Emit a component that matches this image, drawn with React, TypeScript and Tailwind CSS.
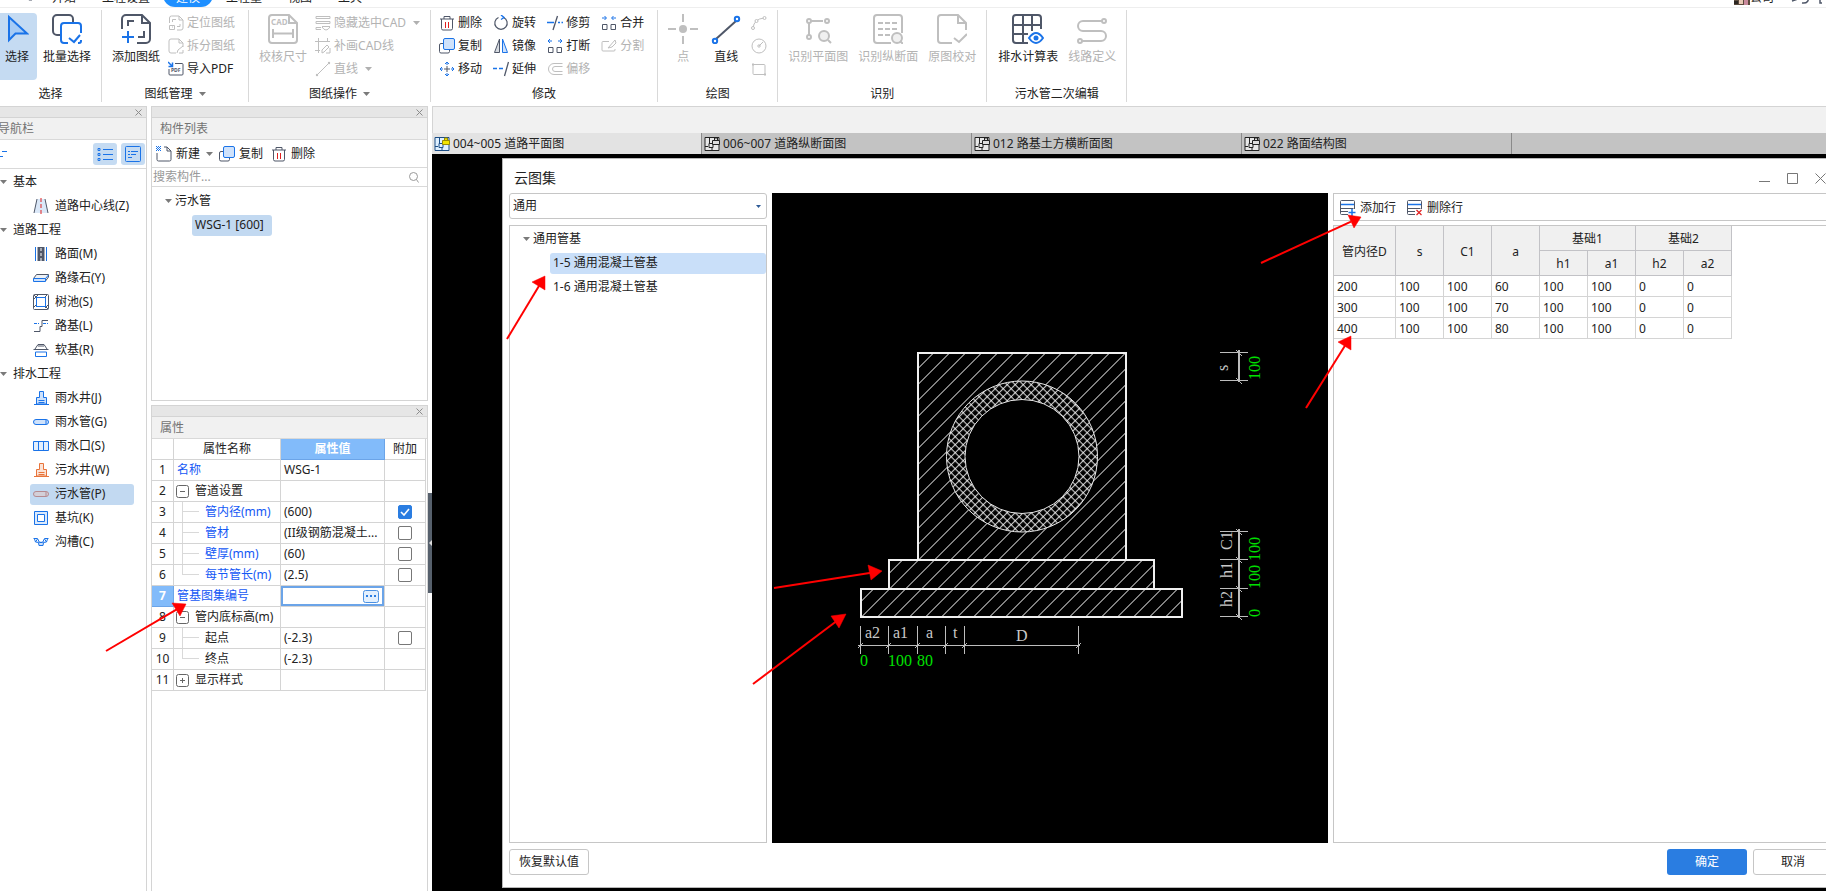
import React from 'react';

const DARK = '#4f5768';
const BLUE = '#1a73e8';
const GRAY = '#bfbfbf';
const LIGHT = '#cfe2fb';

interface IconProps {
  size?: number;
  children: React.ReactNode;
}

const Icon = ({ size = 16, children }: IconProps) => (
  <svg width={size} height={size} viewBox={`0 0 ${size} ${size}`} fill="none" className="shrink-0" aria-hidden="true">
    {children}
  </svg>
);

const Caret = ({ className = 'text-[#7a7a7a]' }: { className?: string }) => (
  <svg width="7" height="4" viewBox="0 0 7 4" className={`shrink-0 ${className}`} aria-hidden="true">
    <path d="M0 0h7L3.5 4z" fill="currentColor" />
  </svg>
);

/* ---------- large ribbon icons (30px) ---------- */

const SelectIcon = () => (
  <svg width="24" height="30" viewBox="0 0 24 30" fill="none" aria-hidden="true">
    <path d="M4 3v23l6.500-6.500L22 19.500z" fill="#a6cbf5" stroke={BLUE} strokeWidth="2" />
  </svg>
);

const BatchSelectIcon = () => (
  <Icon size={30}>
    <path d="M9 21H5a4 4 0 0 1-4-4V5a4 4 0 0 1 4-4h12a4 4 0 0 1 4 4v3" stroke={DARK} strokeWidth="2" />
    <path d="M16 29h-4a3 3 0 0 1-3-3V12a3 3 0 0 1 3-3h14a3 3 0 0 1 3 3v7M29 26v1a2 2 0 0 1-2 2h-1" stroke={BLUE} strokeWidth="2" />
    <path d="M17 24l5 4 6-7" stroke={BLUE} strokeWidth="2" />
  </Icon>
);

const AddDrawingIcon = () => (
  <Icon size={30}>
    <path d="M1 15V5a4 4 0 0 1 4-4h16l8 8v16a4 4 0 0 1-4 4h-9" stroke={DARK} strokeWidth="2" />
    <path d="M21 1v8h8" stroke={DARK} strokeWidth="2" />
    <path d="M7 12V7h6M17 23h6v-6" stroke={DARK} strokeWidth="2" />
    <path d="M7 17v12M1 23h12" stroke={BLUE} strokeWidth="2" />
  </Icon>
);

const CheckSizeIcon = () => (
  <Icon size={30}>
    <path d="M21 1H4a3 3 0 0 0-3 3v22a3 3 0 0 0 3 3h22a3 3 0 0 0 3-3V9zv8h8" stroke={GRAY} strokeWidth="2" />
    <path d="M5 15v9M25 15v9M5 19.500h20" stroke={GRAY} strokeWidth="2" />
    <text x="3" y="11" fontSize="8" fontWeight="700" fill={GRAY}>CAD</text>
  </Icon>
);

const PointIcon = () => (
  <Icon size={30}>
    <path d="M15 0v8M15 22v8M0 15h8M22 15h8" stroke={GRAY} strokeWidth="2" />
    <circle cx="15" cy="15" r="4" fill={GRAY} />
  </Icon>
);

const LineIcon = () => (
  <Icon size={30}>
    <path d="M5 25L25 7" stroke={DARK} strokeWidth="2" />
    <circle cx="4" cy="27" r="2.200" fill="#fff" stroke={BLUE} strokeWidth="2" />
    <circle cx="26" cy="5" r="2.200" fill="#fff" stroke={BLUE} strokeWidth="2" />
  </Icon>
);

const PlanIcon = () => (
  <Icon size={30}>
    <path d="M6 7h14M6 7v14" stroke={GRAY} strokeWidth="2" />
    <circle cx="6" cy="7" r="2" fill="#fff" stroke={GRAY} strokeWidth="2" />
    <circle cx="24" cy="7" r="2" fill="#fff" stroke={GRAY} strokeWidth="2" />
    <circle cx="6" cy="23" r="2" fill="#fff" stroke={GRAY} strokeWidth="2" />
    <circle cx="21" cy="22" r="5" fill="#f0f0f0" stroke={GRAY} strokeWidth="2" />
    <path d="M25 26l3 3" stroke={GRAY} strokeWidth="2" />
  </Icon>
);

const SectionIcon = () => (
  <Icon size={30}>
    <path d="M18 29H4a3 3 0 0 1-3-3V4a3 3 0 0 1 3-3h22a3 3 0 0 1 3 3v15" stroke={GRAY} strokeWidth="2" />
    <path d="M5 9h20M5 15h20M5 21h12" stroke={GRAY} strokeWidth="2" strokeDasharray="5 2" />
    <circle cx="24" cy="24" r="5" fill="#f0f0f0" stroke={GRAY} strokeWidth="2" />
    <path d="M27 27l3 3" stroke={GRAY} strokeWidth="2" />
  </Icon>
);

const CompareIcon = () => (
  <Icon size={30}>
    <path d="M15 29H4a3 3 0 0 1-3-3V4a3 3 0 0 1 3-3h17l8 8v7" stroke={GRAY} strokeWidth="2" />
    <path d="M21 1v8h8" stroke={GRAY} strokeWidth="2" />
    <path d="M17 24l5 4 8-8" stroke={GRAY} strokeWidth="2" />
  </Icon>
);

const DrainTableIcon = () => (
  <Icon size={32}>
    <path d="M16 29H4a3 3 0 0 1-3-3V4a3 3 0 0 1 3-3h22a3 3 0 0 1 3 3v11M1 11h28M1 20h15M11 1v28M20 1v16" stroke={DARK} strokeWidth="2" />
    <path d="M17 24q7-10 14 0q-7 10-14 0z" fill="#fff" stroke={BLUE} strokeWidth="2" />
    <circle cx="24" cy="24" r="2.500" fill={BLUE} />
  </Icon>
);

const RouteIcon = () => (
  <Icon size={30}>
    <path d="M25 7H6a5 5 0 0 0 0 10h18a5 5 0 0 1 0 10H5" stroke={GRAY} strokeWidth="2" />
    <circle cx="27" cy="7" r="2" fill="#fff" stroke={GRAY} strokeWidth="2" />
    <circle cx="3" cy="27" r="2" fill="#fff" stroke={GRAY} strokeWidth="2" />
  </Icon>
);

/* ---------- small icons (16px) ---------- */

const LocateIcon = () => (
  <Icon>
    <path d="M1.500 8V3q0-2 2-2H11l4 4v8q0 2-2 2H9M11 1v4h4M4.500 7V4.500H8M9 11.500h3V9" stroke={GRAY} />
    <path d="M1.500 10.500h5v4h-5zM4 12h1" stroke={GRAY} />
  </Icon>
);

const SplitIcon = () => (
  <Icon>
    <path d="M8 15H3q-2 0-2-2V3q0-2 2-2h8l4 4v4M11 1v4h4" stroke={GRAY} />
    <path d="M9 15l1-3 5-4M11 15h4v-3" stroke={GRAY} />
  </Icon>
);

const PdfIcon = () => (
  <Icon>
    <path d="M7 2.500h7q1 0 1 1V13q0 1-1 1H2q-1 0-1-1V8" stroke={DARK} />
    <path d="M0 1l4 4M4.500 1.500v4h-4" stroke={BLUE} strokeWidth="1.500" />
    <text x="3" y="11" fontSize="5" fontWeight="700" fill={DARK}>PDF</text>
  </Icon>
);

const HideCadIcon = () => (
  <Icon>
    <path d="M1 1.500h14v2H1zM1 6.500h14v2H1zM6 14.500H1v-2h5M15 11.500H7M7 12q4 6 8 0" stroke={GRAY} />
  </Icon>
);

const PatchIcon = () => (
  <Icon>
    <path d="M3.500 0v15M0 3.500h15M12.500 0v4M0 12.500h5M7 15v-3l5-5 2 2-5 5zM11 15h4v-5" stroke={GRAY} />
  </Icon>
);

const SmallLineIcon = () => (
  <Icon>
    <path d="M3 13L13 3" stroke={GRAY} />
    <circle cx="2" cy="14" r="1.200" fill={GRAY} />
    <circle cx="14" cy="2" r="1.200" fill={GRAY} />
  </Icon>
);

const TrashIcon = () => (
  <Icon>
    <path d="M1 4h14M5 4V1.500h6V4M2.500 4v9.500q0 1.500 1.500 1.500h8q1.500 0 1.500-1.500V4" stroke={DARK} />
    <path d="M6.500 7v6M9.500 7v6" stroke="#e02020" />
  </Icon>
);

const CopyIcon = () => (
  <Icon>
    <path d="M5 5.500H2q-1.500 0-1.500 1.500v6.500Q.5 15 2 15h7q1.500 0 1.500-1.500V12" stroke={DARK} />
    <rect x="4.500" y=".5" width="11" height="11" rx="1.500" fill={LIGHT} stroke={BLUE} />
  </Icon>
);

const MoveIcon = () => (
  <Icon>
    <path d="M8 4v-3M8 15v-3M1 8h3M12 8h3M6 3l2-2 2 2M6 13l2 2 2-2M3 6L1 8l2 2M13 6l2 2-2 2" stroke={BLUE} />
    <path d="M8 5v6M5 8h6" stroke={DARK} />
  </Icon>
);

const RotateIcon = () => (
  <Icon>
    <path d="M5.500 2.500a6.200 6.200 0 1 0 5 0" stroke={DARK} strokeWidth="1.200" />
    <path d="M8 0l3 2.500-3 2" stroke={BLUE} strokeWidth="1.400" />
  </Icon>
);

const MirrorIcon = () => (
  <Icon>
    <path d="M6.500 1v13.500H1.500z" fill="#d6dae0" stroke={DARK} />
    <path d="M9.500 1v13.500h5z" fill={LIGHT} stroke={BLUE} />
  </Icon>
);

const ExtendIcon = () => (
  <Icon>
    <path d="M0 7.500h4M6 7.500h4" stroke={BLUE} strokeWidth="1.300" />
    <path d="M15.500 1l-4 14" stroke={DARK} strokeWidth="1.300" />
  </Icon>
);

const TrimIcon = () => (
  <Icon>
    <path d="M0 7.500h7M11 7.500h2M14.500 7.500H16" stroke={BLUE} strokeWidth="1.300" />
    <path d="M10.500 1L6 15" stroke={DARK} strokeWidth="1.300" />
  </Icon>
);

const BreakIcon = () => (
  <Icon>
    <path d="M5 3H1M3 1L1 3l2 2M11 3h4M13 1l2 2-2 2" stroke={BLUE} />
    <path d="M1.500 9.500h4.500v5H1.500zM10 9.500h4.500v5H10z" stroke={DARK} />
  </Icon>
);

const MergeIcon = () => (
  <Icon>
    <path d="M1 3h4M3.500 1l2 2-2 2M15 3h-4M12.500 1l-2 2 2 2" stroke={BLUE} />
    <path d="M1.500 9.500h4.500v5H1.500zM10 9.500h4.500v5H10z" stroke={DARK} />
  </Icon>
);

const OffsetIcon = () => (
  <Icon>
    <path d="M15.500 2.500H7a5.500 5.500 0 0 0 0 11h8.500M15.500 5.500H8a2.500 2.500 0 0 0 0 5h7.500" stroke={GRAY} />
  </Icon>
);

const DivideIcon = () => (
  <Icon>
    <path d="M8 3.500H2q-1 0-1 1V12q0 1 1 1h11q1 0 1-1v-1M7 10l7-8 1 3-4 4z" stroke={GRAY} />
  </Icon>
);

const ArcIcon = () => (
  <Icon>
    <path d="M2 13Q3 4 13 3" stroke={GRAY} />
    <circle cx="2" cy="13" r="1.500" fill="#fff" stroke={GRAY} />
    <circle cx="5.500" cy="6" r="1.500" fill="#fff" stroke={GRAY} />
    <circle cx="13.500" cy="3" r="1.500" fill="#fff" stroke={GRAY} />
  </Icon>
);

const CircleIcon = () => (
  <Icon>
    <circle cx="8" cy="8" r="7" stroke={GRAY} />
    <path d="M8 8l4-4" stroke={GRAY} />
    <circle cx="8" cy="8" r="1.200" stroke={GRAY} />
  </Icon>
);

const RectIcon = () => (
  <Icon>
    <rect x="2" y="3.500" width="12" height="10" rx="1" stroke={GRAY} />
    <path d="M1 3.500h2M13 13.500h2" stroke={GRAY} strokeWidth="2" />
  </Icon>
);

const NewIcon = () => (
  <Icon>
    <path d="M1 7v6.500Q1 15 2.500 15h11q1.500 0 1.500-1.500V5l-4-4H8M11 1v4h4" stroke={DARK} />
    <path d="M0 .5h5M0 2.500h5M0 4.500h5" stroke={BLUE} strokeDasharray="1 1" />
    <path d="M1 1.500h4M1 3.500h4" stroke={BLUE} strokeDasharray="1 1" />
  </Icon>
);

const ListIcon = () => (
  <Icon>
    <path d="M6 3.500h10M6 8.500h10M6 13.500h10" stroke={BLUE} />
    <path d="M1 2.500h2v2H1zM1 7.500h2v2H1zM1 12.500h2v2H1z" stroke={BLUE} />
  </Icon>
);

const DetailIcon = () => (
  <Icon>
    <rect x=".5" y=".5" width="15" height="15" rx="1" stroke={BLUE} />
    <path d="M3 5.500h2M6 5.500h7M3 8.500h2M6 8.500h5M3 11.500h4" stroke={BLUE} />
  </Icon>
);

const CenterLineIcon = () => (
  <Icon>
    <path d="M4 1h8l3 14H1z" fill="#dbe8f8" />
    <path d="M4 1L1 15M12 1l3 14" stroke={DARK} />
    <path d="M8 0v16" stroke="#e02020" strokeDasharray="4 2" />
  </Icon>
);

const RoadIcon = () => (
  <Icon>
    <path d="M2.500 1v14M13.500 1v14" stroke={BLUE} />
    <path d="M4.500 1h7v14h-7z" fill={DARK} />
    <path d="M8 2v13" stroke="#fff" strokeDasharray="3 2" />
  </Icon>
);

const CurbIcon = () => (
  <Icon>
    <path d="M.5 8.500l3-4h12V7l-3 4" fill="#eef1f5" stroke={DARK} />
    <path d="M.5 8.500h12v3H.5zM12.500 8.500l3-3.500" fill={LIGHT} stroke={BLUE} />
  </Icon>
);

const TreePoolIcon = () => (
  <Icon>
    <rect x=".5" y=".5" width="15" height="15" rx="1" stroke={DARK} />
    <path d="M1 5l4-4M1 13l3-3M11 4l3-3M12 14l3-3M1 1l3 3M12 12l3 3" stroke={DARK} />
    <rect x="3.500" y="3.500" width="9" height="9" fill="#fff" stroke={BLUE} />
  </Icon>
);

const SubgradeIcon = () => (
  <Icon>
    <path d="M1 13.500h6v-5h2v-6h6" stroke={DARK} />
    <path d="M1 5.500h5M10 5.500h5" stroke={BLUE} strokeDasharray="3 1" />
  </Icon>
);

const SoftBaseIcon = () => (
  <Icon>
    <path d="M.5 7.500h15M2 7l3-4.500h6L14 7M5 4h6" stroke={DARK} />
    <path d="M2.500 10v4.500h11V10z" stroke={BLUE} />
  </Icon>
);

const WellIcon = ({ color, fill }: { color: string; fill: string }) => (
  <Icon>
    <path d="M3.500 14V7.500H6.500V1.500h4v6h3V14z" fill={fill} stroke={color} />
    <path d="M5.500 10.500h6M5.500 12.500h6M1 14.500h15" stroke={color} />
  </Icon>
);

const PipeIcon = ({ color, fill }: { color: string; fill: string }) => (
  <Icon>
    <rect x=".5" y="5.500" width="15" height="5" rx="2.500" fill={fill} stroke={color} />
    <path d="M13 6v4" stroke={color} />
  </Icon>
);

const InletIcon = () => (
  <Icon>
    <path d="M.5 3.500h15v9H.5zM5.500 3.500v9M10.500 3.500v9" fill="#e3effd" stroke={BLUE} />
  </Icon>
);

const PitIcon = () => (
  <Icon>
    <path d="M1.500 1.500h13v13h-13z" fill="#dceafc" stroke={BLUE} />
    <path d="M4.500 4.500h7v7h-7z" fill="#fff" stroke={BLUE} />
  </Icon>
);

const TrenchIcon = () => (
  <Icon>
    <path d="M4.500 7h7l-1.500 5H6z" fill={LIGHT} />
    <path d="M.5 4.500h4l2 4h3l2-4h4M1.500 5l1 3 3 .5.5 3h4l.5-3 3-.5 1-3M2.500 8l2-3M13.500 8l-2-3" stroke={BLUE} />
  </Icon>
);

const DwgIcon = ({ active }: { active?: boolean }) => (
  <Icon>
    <path d="M1 1.500h14v13H1z" fill={active ? '#dff0ff' : '#e8e8e8'} stroke={active ? '#1c4e86' : '#222'} />
    <path d="M5.500 1v6M1 10.500h3M8 15v-3M5 7.500h4v4H5z" stroke={active ? '#1c4e86' : '#222'} />
    <path d="M8.500 4.500h7v4h-7zM10.500 4.500V2h3v2.500" fill={active ? '#f2e400' : '#ddd'} stroke={active ? '#9a8b00' : '#222'} />
  </Icon>
);

const RowIcon = ({ kind }: { kind: 'add' | 'remove' }) => (
  <Icon>
    <path d="M8 14.500H1.500q-1 0-1-1v-12q0-1 1-1h12q1 0 1 1V9M.5 8.500h13M1 11.500h7" stroke={DARK} />
    <path d="M1 4.500h13" stroke={BLUE} strokeWidth="1.500" />
    {kind === 'add' ? (
      <path d="M12 9v7M8.500 12.500h7" stroke={BLUE} strokeWidth="1.500" />
    ) : (
      <path d="M9.500 10l5 5M14.500 10l-5 5" stroke="#e02020" strokeWidth="1.200" />
    )}
  </Icon>
);

/* ---------- ribbon ---------- */

interface ToolProps {
  icon: React.ReactNode;
  label: string;
  disabled?: boolean;
  selected?: boolean;
  caret?: boolean;
}

const BigTool = ({ icon, label, disabled, selected }: ToolProps) => (
  <button
    disabled={disabled}
    className={`flex flex-col items-center mt-[3px] h-[67px] pt-px whitespace-nowrap ${selected ? 'bg-[#c5dbf2] rounded-r pl-[5px] pr-2' : ''} ${disabled ? 'text-[#b3b3b3]' : 'text-[#222]'}`}
  >
    <span className="flex items-start h-[30px]">{icon}</span>
    <span className="mt-[5px]">{label}</span>
  </button>
);

const SmallTool = ({ icon, label, disabled, caret }: ToolProps) => (
  <button
    disabled={disabled}
    className={`flex items-center h-[23px] gap-[3px] whitespace-nowrap ${disabled ? 'text-[#b3b3b3]' : 'text-[#222]'}`}
  >
    {icon}
    <span>{label}</span>
    {caret && <span className="ml-1"><Caret className="text-[#b0b0b0]" /></span>}
  </button>
);

interface GroupProps {
  label: string;
  caret?: boolean;
  className?: string;
  children: React.ReactNode;
}

const Group = ({ label, caret, className = '', children }: GroupProps) => (
  <section className="flex flex-col h-[92px] border-r border-[#d9d9d9]">
    <div className={`flex ${className}`}>{children}</div>
    <div className="mt-auto h-4 flex items-center justify-center gap-1.5">
      {label}
      {caret && <Caret />}
    </div>
  </section>
);

const menus = ['开始', '工程设置', '建模', '工程量', '视图', '工具'];

const MenuBar = () => (
  <nav className="h-2 shrink-0 overflow-hidden border-b border-[#eeeeee] flex items-end">
    <svg width="39" height="8" viewBox="0 0 39 8" className="shrink-0" aria-hidden="true">
      <path d="M28 0h4v1.500h-3z" fill={DARK} />
    </svg>
    {menus.map((m) => (
      <button
        key={m}
        className={`px-[13px] h-6 shrink-0 pb-px flex items-end whitespace-nowrap ${m === '建模' ? 'bg-[#1e8fff] text-white rounded-full' : ''}`}
      >
        {m}
      </button>
    ))}
    <div className="ml-auto flex items-end shrink-0 pr-1">
      <svg width="16" height="16" viewBox="0 0 16 16" aria-hidden="true">
        <path d="M0 0h16v14H0z" fill="#5a4a3c" />
        <path d="M0 10h4v3H0z" fill="#2b2622" />
        <path d="M5 9h4v4H5z" fill="#e8c9b5" />
        <path d="M10 9h4v5h-4z" fill="#c98a9c" />
      </svg>
      <span className="pb-px">公司</span>
      <svg width="44" height="16" viewBox="0 0 44 16" fill="none" stroke={DARK} strokeWidth="1.500" className="ml-1" aria-hidden="true">
        <path d="M13 8l4 1-3 1M24 12q8 1 6-8M42 4v8h4" />
      </svg>
    </div>
  </nav>
);

const Ribbon = () => (
  <header className="flex shrink-0 h-[98px] pt-0.5">
    <Group label="选择" className="gap-1.5 pr-[10px]">
      <BigTool icon={<SelectIcon />} label="选择" selected />
      <BigTool icon={<BatchSelectIcon />} label="批量选择" />
    </Group>
    <Group label="图纸管理" caret className="gap-2 pl-[10px] pr-[13px]">
      <BigTool icon={<AddDrawingIcon />} label="添加图纸" />
      <div className="pt-px">
        <SmallTool icon={<LocateIcon />} label="定位图纸" disabled />
        <SmallTool icon={<SplitIcon />} label="拆分图纸" disabled />
        <SmallTool icon={<PdfIcon />} label="导入PDF" />
      </div>
    </Group>
    <Group label="图纸操作" caret className="gap-2 px-[10px]">
      <BigTool icon={<CheckSizeIcon />} label="校核尺寸" disabled />
      <div className="pt-px">
        <SmallTool icon={<HideCadIcon />} label="隐藏选中CAD" disabled caret />
        <SmallTool icon={<PatchIcon />} label="补画CAD线" disabled />
        <SmallTool icon={<SmallLineIcon />} label="直线" disabled caret />
      </div>
    </Group>
    <Group label="修改" className="gap-[11px] pl-2 pr-[13px] pt-px">
      <div>
        <SmallTool icon={<TrashIcon />} label="删除" />
        <SmallTool icon={<CopyIcon />} label="复制" />
        <SmallTool icon={<MoveIcon />} label="移动" />
      </div>
      <div>
        <SmallTool icon={<RotateIcon />} label="旋转" />
        <SmallTool icon={<MirrorIcon />} label="镜像" />
        <SmallTool icon={<ExtendIcon />} label="延伸" />
      </div>
      <div>
        <SmallTool icon={<TrimIcon />} label="修剪" />
        <SmallTool icon={<BreakIcon />} label="打断" />
        <SmallTool icon={<OffsetIcon />} label="偏移" disabled />
      </div>
      <div>
        <SmallTool icon={<MergeIcon />} label="合并" />
        <SmallTool icon={<DivideIcon />} label="分割" disabled />
      </div>
    </Group>
    <Group label="绘图" className="px-[10px]">
      <BigTool icon={<PointIcon />} label="点" disabled />
      <div className="flex ml-[13px] mr-[10px]">
        <BigTool icon={<LineIcon />} label="直线" />
      </div>
      <div className="pt-px">
        {[<ArcIcon />, <CircleIcon />, <RectIcon />].map((icon, i) => (
          <button key={i} disabled aria-label={['圆弧', '圆', '矩形'][i]} className="flex items-center h-[23px]">
            {icon}
          </button>
        ))}
      </div>
    </Group>
    <Group label="识别" className="gap-[10px] px-[10px]">
      <BigTool icon={<PlanIcon />} label="识别平面图" disabled />
      <BigTool icon={<SectionIcon />} label="识别纵断面" disabled />
      <BigTool icon={<CompareIcon />} label="原图校对" disabled />
    </Group>
    <Group label="污水管二次编辑" className="gap-[10px] pl-[11px] pr-[10px]">
      <BigTool icon={<DrainTableIcon />} label="排水计算表" />
      <BigTool icon={<RouteIcon />} label="线路定义" disabled />
    </Group>
  </header>
);

/* ---------- docked panels ---------- */

const PanelHead = ({ title, className = 'pl-2' }: { title: string; className?: string }) => (
  <>
    <div className="h-[11px] bg-[#e6e6e6] border-b border-[#d4d4d4] flex items-center justify-end pr-1">
      <button aria-label="关闭" className="flex">
        <svg width="7" height="7" viewBox="0 0 7 7" stroke="#8c8c8c" aria-hidden="true">
          <path d="M.5.5l6 6M6.500.5l-6 6" />
        </svg>
      </button>
    </div>
    <h2 className={`h-[22px] bg-[#f1f1f1] border-b border-[#d9d9d9] flex items-center text-[#737373] ${className}`}>{title}</h2>
  </>
);

interface NavItem {
  label: string;
  icon: React.ReactNode;
  selected?: boolean;
}

const navGroups: { title: string; items: NavItem[] }[] = [
  { title: '基本', items: [{ label: '道路中心线(Z)', icon: <CenterLineIcon /> }] },
  {
    title: '道路工程',
    items: [
      { label: '路面(M)', icon: <RoadIcon /> },
      { label: '路缘石(Y)', icon: <CurbIcon /> },
      { label: '树池(S)', icon: <TreePoolIcon /> },
      { label: '路基(L)', icon: <SubgradeIcon /> },
      { label: '软基(R)', icon: <SoftBaseIcon /> },
    ],
  },
  {
    title: '排水工程',
    items: [
      { label: '雨水井(J)', icon: <WellIcon color={BLUE} fill={LIGHT} /> },
      { label: '雨水管(G)', icon: <PipeIcon color={BLUE} fill={LIGHT} /> },
      { label: '雨水口(S)', icon: <InletIcon /> },
      { label: '污水井(W)', icon: <WellIcon color="#e8743b" fill="#fbe3d6" /> },
      { label: '污水管(P)', icon: <PipeIcon color="#b58a90" fill="#d3cfd8" />, selected: true },
      { label: '基坑(K)', icon: <PitIcon /> },
      { label: '沟槽(C)', icon: <TrenchIcon /> },
    ],
  },
];

const NavPanel = () => (
  <aside className="w-[147px] shrink-0 border-t border-r border-[#d4d4d4]">
    <PanelHead title="导航栏" className="-ml-0.5" />
    <div className="h-[29px] border-b border-[#d9d9d9] flex items-center gap-1 pr-px">
      <svg width="8" height="8" viewBox="0 0 8 8" stroke={BLUE} className="mr-auto" aria-hidden="true">
        <path d="M2 1.500h5M0 6.500h3" />
      </svg>
      <button aria-label="列表" className="w-6 h-[22px] rounded-[3px] bg-[#c5dbf2] flex items-center justify-center"><ListIcon /></button>
      <button aria-label="详情" className="w-6 h-[22px] rounded-[3px] bg-[#c5dbf2] flex items-center justify-center"><DetailIcon /></button>
    </div>
    <ul className="pt-px">
      {navGroups.map((g) => (
        <li key={g.title}>
          <div className="h-6 flex items-center gap-1.5">
            <Caret />
            {g.title}
          </div>
          <ul>
            {g.items.map((item) => (
              <li key={item.label} className="h-6 flex items-center pl-[30px] pr-3">
                <button className={`w-full h-[21px] pl-[3px] flex items-center gap-1.5 rounded-[3px] whitespace-nowrap ${item.selected ? 'bg-[#c2d9f1]' : ''}`}>
                  {item.icon}
                  {item.label}
                </button>
              </li>
            ))}
          </ul>
        </li>
      ))}
    </ul>
  </aside>
);

const ComponentPanel = () => (
  <section className="h-[295px] shrink-0 border border-[#d4d4d4]">
    <PanelHead title="构件列表" />
    <div className="h-7 border-b border-[#d9d9d9] flex items-center pl-1">
      <button className="flex items-center gap-1"><NewIcon />新建</button>
      <span className="ml-1.5 mr-1.5"><Caret /></span>
      <button className="flex items-center gap-1"><CopyIcon />复制</button>
      <button className="flex items-center gap-1 ml-2"><TrashIcon />删除</button>
    </div>
    <label className="h-[19px] border-b border-[#d9d9d9] flex items-center pl-px pr-2">
      <input aria-label="搜索构件" placeholder="搜索构件..." className="flex-1 min-w-0 outline-none placeholder:text-[#999]" />
      <svg width="10" height="11" viewBox="0 0 10 11" fill="none" stroke="#999" aria-hidden="true">
        <circle cx="4.500" cy="4.500" r="4" />
        <path d="M7.500 7.500l2 3" />
      </svg>
    </label>
    <ul className="pt-0.5 pl-[13px]">
      <li className="h-6 flex items-center gap-[3px]"><Caret />污水管</li>
      <li className="h-6 flex items-center pl-[27px]">
        <button className="h-[21px] px-[3px] w-20 text-left whitespace-nowrap rounded-[3px] bg-[#c2d9f1]">WSG-1 [600]</button>
      </li>
    </ul>
  </section>
);

interface PropRow {
  name: string;
  value?: string;
  kind: 'plain' | 'open' | 'closed' | 'child' | 'last';
  link?: boolean;
  check?: boolean;
}

const propRows: PropRow[] = [
  { name: '名称', value: 'WSG-1', kind: 'plain', link: true },
  { name: '管道设置', kind: 'open' },
  { name: '管内径(mm)', value: '(600)', kind: 'child', link: true, check: true },
  { name: '管材', value: '(II级钢筋混凝土...', kind: 'child', link: true, check: false },
  { name: '壁厚(mm)', value: '(60)', kind: 'child', link: true, check: false },
  { name: '每节管长(m)', value: '(2.5)', kind: 'last', link: true, check: false },
  { name: '管基图集编号', kind: 'plain', link: true },
  { name: '管内底标高(m)', kind: 'open' },
  { name: '起点', value: '(-2.3)', kind: 'child', check: false },
  { name: '终点', value: '(-2.3)', kind: 'last' },
  { name: '显示样式', kind: 'closed' },
];

const Branch = ({ last }: { last: boolean }) => (
  <span className="flex flex-col w-[17px] h-5 ml-[5px] mr-1.5 shrink-0">
    <span className="h-2.5 border-l border-b border-[#d9d9d9]" />
    {!last && <span className="flex-1 border-l border-[#d9d9d9]" />}
  </span>
);

const Toggle = ({ open }: { open: boolean }) => (
  <button aria-label={open ? '折叠' : '展开'} className="mr-1.5 -ml-px shrink-0">
    <svg width="13" height="13" viewBox="0 0 13 13" fill="none" stroke="#666" aria-hidden="true">
      <rect x=".5" y=".5" width="12" height="12" rx="2" fill="#fff" />
      <path d={open ? 'M4 6.500h5' : 'M4 6.500h5M6.500 4v5'} />
    </svg>
  </button>
);

const PropertyPanel = () => (
  <section className="mt-1 flex-1 min-h-0 border border-b-0 border-[#d4d4d4]">
    <PanelHead title="属性" />
    <table className="table-fixed w-[274px] border-separate border-spacing-0">
      <colgroup>
        <col className="w-[22px]" />
        <col className="w-[107px]" />
        <col className="w-[104px]" />
        <col className="w-[41px]" />
      </colgroup>
      <thead>
        <tr className="h-[21px]">
          <th className="p-0 border-r border-b border-[#d4d4d4]" />
          <th className="p-0 border-r border-b border-[#d4d4d4] font-normal">属性名称</th>
          <th className="p-0 border-r border-b border-[#6ba4e8] bg-[#82bbfa] text-white">属性值</th>
          <th className="p-0 border-r border-b border-[#d4d4d4] font-normal">附加</th>
        </tr>
      </thead>
      <tbody>
        {propRows.map((row, i) => {
          const current = i === 6;
          return (
            <tr key={row.name} className="h-[21px]">
              <td className={`p-0 border-r border-b text-center ${current ? 'bg-[#82bbfa] border-[#6ba4e8] text-white font-bold' : 'border-[#d4d4d4]'}`}>{i + 1}</td>
              <td className="p-0 border-r border-b border-[#d4d4d4]">
                <div className={`h-5 pl-[3px] flex items-center whitespace-nowrap overflow-hidden ${row.link ? 'text-[#1458f5]' : ''}`}>
                  {(row.kind === 'open' || row.kind === 'closed') && <Toggle open={row.kind === 'open'} />}
                  {(row.kind === 'child' || row.kind === 'last') && <Branch last={row.kind === 'last'} />}
                  {row.name}
                </div>
              </td>
              <td className="p-0 border-r border-b border-[#d4d4d4]">
                {current ? (
                  <div className="h-5 flex items-center border-2 border-[#6ba4e8]">
                    <input aria-label="管基图集编号" className="flex-1 min-w-0 outline-none" />
                    <button aria-label="选择图集" className="mr-[3px]">
                      <svg width="16" height="13" viewBox="0 0 16 13" aria-hidden="true">
                        <rect x=".5" y=".5" width="15" height="12" rx="2" fill="#e3f0fe" stroke="#4a90e2" />
                        <path d="M3 5h2v2H3zM7 5h2v2H7zM11 5h2v2h-2z" fill="#2a7de1" />
                      </svg>
                    </button>
                  </div>
                ) : (
                  <div className="h-5 pl-[3px] flex items-center whitespace-nowrap overflow-hidden">{row.value}</div>
                )}
              </td>
              <td className="p-0 border-r border-b border-[#d4d4d4]">
                {row.check !== undefined && (
                  <div className="relative flex items-center justify-center">
                    <input
                      type="checkbox"
                      aria-label={row.name}
                      defaultChecked={row.check}
                      className="peer appearance-none w-3.5 h-3.5 rounded-[2px] border border-[#777] bg-white checked:bg-[#2a7de1] checked:border-[#2a7de1]"
                    />
                    <svg width="10" height="8" viewBox="0 0 10 8" fill="none" stroke="#fff" strokeWidth="1.600" className="absolute hidden peer-checked:block pointer-events-none" aria-hidden="true">
                      <path d="M1 4l3 3 5-6" />
                    </svg>
                  </div>
                )}
              </td>
            </tr>
          );
        })}
      </tbody>
    </table>
  </section>
);

/* ---------- section drawing ---------- */

const hatch = Array.from({ length: 54 }, (_, i) => {
  const sum = 1.5 + 16 * i;
  return `M${sum - 150} 150L${sum - 430} 430`;
}).join('');

const rightTicks = [159, 187, 338, 366, 395, 423];
const bottomTicks = [88, 116, 145, 173, 192, 306];

const dimLabels: [string, number, number][] = [
  ['a2', 93, 445], ['a1', 121, 445], ['a', 154, 445], ['t', 181, 445], ['D', 244, 448],
];
const dimValues: [string, number, number][] = [['0', 88, 473], ['100', 116, 473], ['80', 145, 473]];
const sideLabels: [string, number, number][] = [['s', 456, 178], ['C1', 460, 357], ['h1', 460, 385], ['h2', 460, 414]];
const sideValues: [string, number, number][] = [['100', 488, 187], ['100', 488, 368], ['100', 488, 396], ['0', 488, 424]];

const SectionDrawing = () => (
  <svg viewBox="0 0 556 650" preserveAspectRatio="xMidYMid meet" className="w-full h-full" fontFamily='"Liberation Serif", "Noto Sans CJK SC", serif' fontSize="16" aria-label="管基断面图">
    <defs>
      <clipPath id="body">
        <path d="M146 160h208v207h28v29h28v28H89v-28h28v-29h29z" />
      </clipPath>
      <pattern id="cross" width="5.657" height="5.657" patternUnits="userSpaceOnUse" patternTransform="rotate(45 250 263)">
        <path d="M0 2.500h6M2.500 0v6" stroke="#fff" strokeWidth=".9" />
      </pattern>
    </defs>
    <path d={hatch} stroke="#fff" strokeWidth="1" clipPath="url(#body)" />
    <g fill="none" stroke="#f0f0f0" strokeWidth="2">
      <path d="M146 160h208v207H146z" />
      <path d="M117 367h265v29H117z" />
      <path d="M89 396h321v28H89z" />
    </g>
    <circle cx="250" cy="263.500" r="75.500" fill="#000" />
    <circle cx="250" cy="263.500" r="75.500" fill="url(#cross)" stroke="#e6e6e6" />
    <circle cx="250" cy="263.500" r="57" fill="#000" stroke="#e6e6e6" />
    <g stroke="#bdbdbd" fill="none">
      <path d="M467 157v32M467 336v89" strokeWidth="2" />
      <path d="M86 452.500h222" />
      {rightTicks.map((y) => (
        <path key={y} d={`M448 ${y + 0.5}h28M464 ${y - 2}l6 6`} />
      ))}
      {bottomTicks.map((x) => (
        <path key={x} d={`M${x + 0.5} 433v28M${x - 2} 455l5-5`} />
      ))}
    </g>
    <g fill="#c8c8c8">
      {dimLabels.map(([t, x, y]) => <text key={t} x={x} y={y}>{t}</text>)}
      {sideLabels.map(([t, x, y]) => <text key={t} transform={`translate(${x} ${y}) rotate(-90)`}>{t}</text>)}
    </g>
    <g fill="#00e000">
      {dimValues.map(([t, x, y]) => <text key={x} x={x} y={y}>{t}</text>)}
      {sideValues.map(([t, x, y]) => <text key={y} transform={`translate(${x} ${y}) rotate(-90)`}>{t}</text>)}
    </g>
  </svg>
);

/* ---------- atlas dialog ---------- */

const sizes = [
  [200, 100, 100, 60, 100, 100, 0, 0],
  [300, 100, 100, 70, 100, 100, 0, 0],
  [400, 100, 100, 80, 100, 100, 0, 0],
];

const headCell = 'px-0 pt-0.5 pb-0 border-r border-b border-[#c2c2c6] bg-[#f0f0f0] font-normal';

const SizeTable = () => (
  <table className="table-fixed w-[398px] border-separate border-spacing-0">
    <colgroup>
      <col className="w-[62px]" />
      {sizes[0].slice(1).map((_, i) => <col key={i} className="w-12" />)}
    </colgroup>
    <thead>
      <tr className="h-[25px]">
        <th rowSpan={2} className={headCell}>管内径D</th>
        <th rowSpan={2} className={headCell}>s</th>
        <th rowSpan={2} className={headCell}>C1</th>
        <th rowSpan={2} className={headCell}>a</th>
        <th colSpan={2} className={headCell}>基础1</th>
        <th colSpan={2} className={headCell}>基础2</th>
      </tr>
      <tr className="h-[25px]">
        {['h1', 'a1', 'h2', 'a2'].map((h) => <th key={h} className={headCell}>{h}</th>)}
      </tr>
    </thead>
    <tbody>
      {sizes.map((row) => (
        <tr key={row[0]} className="h-[21px]">
          {row.map((v, i) => <td key={i} className="pt-0.5 pb-0 pr-0 pl-[3px] border-r border-b border-[#d4d4d4]">{v}</td>)}
        </tr>
      ))}
    </tbody>
  </table>
);

const AtlasDialog = () => (
  <div role="dialog" aria-label="云图集" className="flex-1 min-w-0 flex flex-col bg-white border border-[#b8b8b8] -mr-4 pl-1.5 pr-2">
    <div className="h-[34px] shrink-0 flex items-center pl-[5px] pr-[7px] pt-1">
      <h1 className="text-sm mr-auto">云图集</h1>
      <div className="flex items-center gap-[17px] text-[#777]">
        <button aria-label="最小化" className="pt-2"><svg width="11" height="2" viewBox="0 0 11 2" aria-hidden="true"><path d="M0 .5h11" stroke="currentColor" /></svg></button>
        <button aria-label="最大化"><svg width="11" height="11" viewBox="0 0 11 11" fill="none" aria-hidden="true"><path d="M.5.5h10v10H.5z" stroke="currentColor" /></svg></button>
        <button aria-label="关闭"><svg width="11" height="11" viewBox="0 0 11 11" aria-hidden="true"><path d="M.5.5l10 10M10.500.5l-10 10" stroke="currentColor" /></svg></button>
      </div>
    </div>
    <div className="flex-1 min-h-0 flex gap-[5px]">
      <div className="w-[258px] shrink-0 flex flex-col gap-1.5">
        <div className="relative">
          <select aria-label="图集类型" className="appearance-none w-full h-[26px] pl-[3px] border border-[#c6c6c6] rounded-[3px] bg-white">
            <option>通用</option>
          </select>
          <svg width="5" height="3" viewBox="0 0 5 3" className="absolute right-1.5 top-3 pointer-events-none" aria-hidden="true">
            <path d="M0 0h5L2.500 3z" fill="#2d5a96" />
          </svg>
        </div>
        <ul className="flex-1 border border-[#c6c6c6] pt-px">
          <li className="h-6 flex items-center gap-[3px] pl-[13px]"><Caret />通用管基</li>
          <li className="h-6 flex items-center pl-10">
            <button className="w-full h-[21px] pl-[3px] text-left rounded-[3px] bg-[#c9dff9]">1-5 通用混凝土管基</button>
          </li>
          <li className="h-6 flex items-center pl-10">
            <button className="w-full h-[21px] pl-[3px] text-left rounded-[3px]">1-6 通用混凝土管基</button>
          </li>
        </ul>
      </div>
      <div className="w-[556px] shrink-0 bg-black">
        <SectionDrawing />
      </div>
      <div className="flex-1 min-w-0 flex flex-col gap-1">
        <div className="h-7 shrink-0 border border-[#c6c6c6] flex items-center gap-[11px] pl-1.5 pt-0.5">
          <button className="flex items-center gap-1"><RowIcon kind="add" />添加行</button>
          <button className="flex items-center gap-1"><RowIcon kind="remove" />删除行</button>
        </div>
        <div className="flex-1 border border-[#c6c6c6]">
          <SizeTable />
        </div>
      </div>
    </div>
    <div className="h-11 shrink-0 flex gap-1.5 pt-1.5">
      <button className="h-[26px] w-20 rounded-[3px] border border-[#c6c6c6] mr-auto">恢复默认值</button>
      <button className="h-[26px] w-20 rounded-[3px] bg-[#2a7de1] text-white">确定</button>
      <button className="h-[26px] w-20 rounded-[3px] border border-[#c6c6c6]">取消</button>
    </div>
  </div>
);

const drawings = ['004~005 道路平面图', '006~007 道路纵断面图', '012 路基土方横断面图', '022 路面结构图'];

const Workspace = () => (
  <main className="flex-1 min-w-0 flex flex-col overflow-hidden">
    <div className="h-[27px] shrink-0 bg-[#f1f1f1] border-t border-l border-[#d4d4d4]" />
    <div className="h-[21px] shrink-0 flex bg-[#c3c3c3]">
      {drawings.map((d, i) => (
        <button
          key={d}
          className={`flex items-center gap-[3px] ${i === 0 ? 'w-[269px] pl-0.5 bg-[#e3e3e3]' : 'w-[270px] pl-0.5 border-l border-[#8a8a8a]'}`}
        >
          <DwgIcon active={i === 0} />
          {d}
        </button>
      ))}
      <span className="flex-1 border-l border-[#8a8a8a]" />
    </div>
    <div className="flex-1 min-h-0 flex bg-black pt-1 pb-[3px] pl-[70px]">
      <AtlasDialog />
    </div>
  </main>
);

/* tail x/y, then the three corners of the head */
const arrows: [number, number, string][] = [
  [106, 651, '186,604 172,603 180,616'],
  [507, 339, '545,276 532,282 545,290'],
  [1261, 263, '1361,217 1348,215 1354,228'],
  [1306, 408, '1351,336 1338,342 1351,350'],
  [774, 588, '882,571 868,565 871,580'],
  [753, 684, '846,614 831,616 839,628'],
];

const Arrows = () => (
  <svg className="absolute inset-0 w-full h-full pointer-events-none" fill="#f00" stroke="#f00" aria-hidden="true">
    {arrows.map(([x, y, head]) => {
      const [tx, ty] = head.split(' ')[0].split(',').map(Number);
      return (
        <g key={head}>
          <line x1={x} y1={y} x2={tx - (tx - x) * 0.1} y2={ty - (ty - y) * 0.1} strokeWidth="2" />
          <polygon points={head} strokeWidth=".5" />
        </g>
      );
    })}
  </svg>
);

export default function App() {
  return (
    <div className='relative h-screen overflow-hidden flex flex-col bg-white text-[#222] text-[12px] leading-4 font-["Noto_Sans","Noto_Sans_CJK_SC",sans-serif]'>
      <MenuBar />
      <Ribbon />
      <div className="flex-1 min-h-0 flex">
        <NavPanel />
        <div className="w-[277px] shrink-0 ml-1 flex flex-col">
          <ComponentPanel />
          <PropertyPanel />
        </div>
        <div className="w-1 shrink-0 flex items-center">
          <button aria-label="收起面板" className="w-full h-[100px] bg-[#56606c] flex items-center justify-end mt-22">
            <svg width="3" height="6" viewBox="0 0 3 6" aria-hidden="true"><path d="M3 0v6L0 3z" fill="#ddd" /></svg>
          </button>
        </div>
        <Workspace />
      </div>
      <Arrows />
    </div>
  );
}
